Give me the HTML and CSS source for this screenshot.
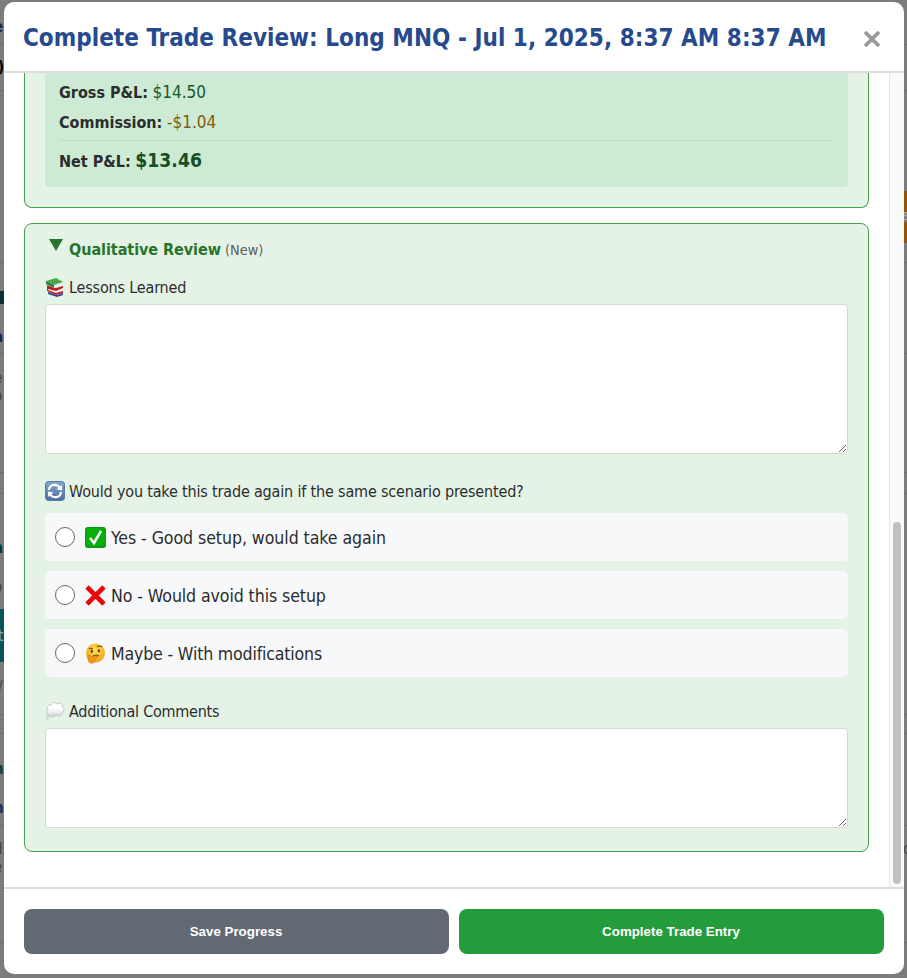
FILE: index.html
```
<!DOCTYPE html>
<html lang="en">
<head>
<meta charset="utf-8">
<title>Complete Trade Review</title>
<link rel="stylesheet" href="styles.css">
</head>
<body>
<div class="backdrop" aria-hidden="true">
  <span class="rule" style="top:44px"></span><span class="rule" style="top:90px"></span><span class="rule" style="top:262px"></span><span class="rule" style="top:353px"></span><span class="rule" style="top:472px"></span><span class="rule" style="top:493px"></span><span class="rule" style="top:714px"></span><span class="rule" style="top:733px"></span><span class="rule" style="top:825px"></span><span class="rule" style="top:942px"></span>
  <span class="block teal" style="top:609px;height:53px"></span>
  <span class="block dark" style="top:291px;height:13px"></span>
  <span class="block orange" style="top:191px;height:22px"></span>
  <span class="block orange" style="top:222px;height:21px"></span>
  <span class="peek navy" style="top:17px">e</span>
  <span class="peek black narrow" style="top:57px">)</span>
  <span class="peek navy" style="top:327px">a</span>
  <span class="peek" style="top:368px">e</span>
  <span class="peek" style="top:386px">o</span>
  <span class="peek deep" style="top:538px">a</span>
  <span class="peek" style="top:577px">o</span>
  <span class="peek light narrow" style="top:626px">t</span>
  <span class="peek narrow" style="top:677px">/</span>
  <span class="peek deep" style="top:759px">n</span>
  <span class="peek navy" style="top:798px">n</span>
  <span class="peek" style="top:839px">d</span>
  <span class="peek" style="top:857px">e</span>
  <span class="peek right" style="top:839px">c</span>
  <span class="peek right pale" style="top:207px">5</span>
</div>
<main class="modal">
  <header class="modal-head">
    <h1>Complete Trade Review: Long MNQ - Jul 1, 2025, 8:37 AM 8:37 AM</h1>
    <button class="close" aria-label="Close"><svg viewBox="0 0 18 18"><path d="M2 2 16 16M16 2 2 16"/></svg></button>
  </header>
  <div class="modal-body">
    <div class="content">
      <section class="panel results">
        <div class="summary">
          <p><b>Gross P&amp;L:</b> <span class="gain">$14.50</span></p>
          <p><b>Commission:</b> <span class="fee">-$1.04</span></p>
          <p class="net"><b>Net P&amp;L:</b> <strong>$13.46</strong></p>
        </div>
      </section>
      <section class="panel review">
        <h2><svg class="arrow" viewBox="0 0 14 12"><path d="M0 0H14L7 12Z"/></svg><span class="name">Qualitative Review</span><small>(New)</small></h2>
        <label class="label" for="lessons">
          <svg class="emoji" viewBox="0 0 20 20"><path fill="#2b4c91" d="M3 14 12 18 18 16V18L12 20 3 17Z"/><path fill="#f2eee8" d="M2 11 11 15 18 12V15L12 18 3 15Z"/><path fill="#bd2027" d="M2 8 11 11 18 9V11L11 14 3 12V13L11 16 18 14V16L11 18 2 14Z"/><path fill="#eee" d="M1 5 9 9 18 6V8L9 11 2 8Z"/><path fill="#287e35" d="M1 4 9 8V11L1 7Z"/><path fill="#49a84d" d="M1 4 11 1 18 5 9 8Z"/></svg>
          <span class="lesson-text">Lessons Learned</span></label>
        <textarea id="lessons" class="tall"></textarea>
        <div class="label again">
          <svg class="emoji" viewBox="0 0 20 20"><defs><linearGradient id="blue" x2="0" y2="1"><stop stop-color="#86a6cc"/><stop offset="1" stop-color="#47719f"/></linearGradient></defs><rect x=".5" y=".5" width="19" height="19" rx="3" fill="url(#blue)" stroke="#5378a5"/><path fill="none" stroke="#fff" stroke-width="2.2" d="M4 9C4.500 3 12 2 15 7M16 11C15.500 17 8 18 5 13"/><path fill="#fff" d="M17 4V9.500L11.500 8.500ZM3 16V10.500L8.500 11.500Z"/></svg>
          <span class="question">Would you take this trade again if the same scenario presented?</span></div>
        <div class="options">
          <label class="option"><input type="radio" name="again"><svg viewBox="0 0 21 21"><rect width="21" height="21" rx="3" fill="#079b0b"/><rect x="1" y="1" width="19" height="18" rx="2" fill="#08ae0b"/><path fill="none" stroke="#fff" stroke-width="2.500" d="M5 11 9 16 16 4"/></svg><span class="yes">Yes - Good setup, would take again</span></label>
          <label class="option"><input type="radio" name="again"><svg viewBox="0 0 21 21"><path fill="none" stroke="#e5090b" stroke-width="4.600" d="M2 2 19 19M19 2 2 19"/></svg><span class="no">No - Would avoid this setup</span></label>
          <label class="option"><input type="radio" name="again"><svg viewBox="0 0 21 21"><defs><radialGradient id="face" cy=".35"><stop stop-color="#ffe450"/><stop offset="1" stop-color="#f9ab24"/></radialGradient></defs><circle cx="10.500" cy="10" r="9.500" fill="url(#face)"/><path fill="none" stroke="#704214" stroke-width="1.100" d="M4 6Q6 4.500 8 6M12 4Q14.500 2 17 4M8 13Q11 11.500 14 13"/><ellipse cx="6.800" cy="8.300" rx="1.200" ry="1.500" fill="#593812"/><ellipse cx="13.800" cy="7.800" rx="1.200" ry="1.500" fill="#593812"/><path fill="#f39a18" stroke="#cf7913" stroke-width=".6" d="M3 12Q5 11 5.500 14L12 13Q14 14 11 15L9 16Q12 18 8 20Q4 21 3 17Z"/></svg><span class="maybe">Maybe - With modifications</span></label>
        </div>
        <label class="label comments" for="comments">
          <svg class="emoji" viewBox="0 0 20 20"><defs><linearGradient id="cloud" x2="0" y2="1"><stop offset=".4" stop-color="#fff"/><stop offset="1" stop-color="#cfd2d2"/></linearGradient></defs><path fill="url(#cloud)" stroke="#b5bab7" stroke-width=".7" d="M4 14C1 13 1 10 3 9C1 6 3 4 6 4C7 1 11 1 12 3C15 1 18 3 17 6C20 7 19 11 17 12C17 15 13 16 11 14C9 17 5 16 4 14Z"/><circle cx="3" cy="16" r="1.500" fill="#ddd" stroke="#bbb" stroke-width=".4"/><circle cx="1.200" cy="18.500" r=".8" fill="#ccc"/></svg>
          <span class="comment-text">Additional Comments</span></label>
        <textarea id="comments"></textarea>
      </section>
    </div>
    <div class="track"><div class="thumb"></div></div>
  </div>
  <footer><button class="save">Save Progress</button><button class="complete">Complete Trade Entry</button></footer>
</main>
</body>
</html>
```
FILE: styles.css
```
* { box-sizing: border-box; }
body { margin: 0; height: 978px; overflow: hidden; position: relative; color: #2b2d2c; font: 16px/20px "DejaVu Sans Condensed", "DejaVu Sans", sans-serif; font-stretch: condensed; }
h1, h2, p { margin: 0; }
button { border: 0; padding: 0; }
svg { display: block; flex: none; }
.backdrop { position: absolute; inset: 0; background: #7d7b7b; overflow: hidden; }
.rule, .block, .peek { position: absolute; }
.rule { left: 0; width: 100%; height: 1px; background: #6c6c6c; }
.block { left: 0; width: 4px; }
.teal { background: #07545d; }
.dark { background: #092f38; }
.block.orange { left: 904px; background: #9a5303; }
.peek { left: -6px; width: 10px; color: #444; font-size: 15px; overflow: hidden; }
.peek.narrow { left: -2px; width: 6px; }
.navy { color: #17295a; font-weight: bold; }
.black { color: #000; font-weight: bold; }
.deep { color: #073a3c; font-weight: bold; }
.light { color: #83aaad; }
.peek.right { left: 903px; }
.peek.pale { color: #aaa; font-size: 11px; }
.modal { position: absolute; left: 4px; top: 2px; width: 900px; height: 972px; background: #fff; border-radius: 10px; overflow: hidden; display: flex; flex-direction: column; }
.modal-head { height: 71px; flex: none; border-bottom: 2px solid #dedede; padding: 2px 23px 0 19px; display: flex; align-items: center; justify-content: space-between; }
h1 { font-size: 24px; line-height: 30px; letter-spacing: .03px; color: #264a8d; white-space: nowrap; }
.close { width: 18px; height: 18px; background: none; margin-top: 2px; }
.close svg { width: 18px; height: 18px; fill: none; stroke: #999; stroke-width: 3.7; }
.modal-body { flex: 1; min-height: 0; display: flex; }
.content { flex: 1; padding: 0 20px; }
.panel { border: 1px solid #45a04b; border-radius: 8px; background: #e5f3e6; padding: 0 20px 20px; }
.results { border-top: 0; border-radius: 0 0 8px 8px; height: 135px; }
.summary { height: 114px; padding: 4px 15px 0 14px; background: #cdead5; border-radius: 0 0 4px 4px; }
.summary p { height: 30px; line-height: 31px; white-space: nowrap; }
.summary .net { border-top: 1px solid #bfdec8; margin-top: 3px; height: 40px; line-height: 40px; }
.gain { color: #17582c; font-size: 17px; }
.fee { color: #815b0a; font-size: 17px; }
.net strong { color: #155023; font-size: 19.2px; }
.review { margin-top: 15px; height: 629px; }
h2 { display: flex; height: 50px; padding: 15px 0 0 4px; font-size: 16px; line-height: 22px; color: #26752b; white-space: nowrap; }
.arrow { width: 14px; height: 12px; fill: #26752b; margin-right: 6px; }
.name { letter-spacing: -.05px; }
small { font-size: 14.4px; font-weight: normal; color: #5b605c; margin-left: 4px; }
.label { display: flex; align-items: center; gap: 4px; height: 20px; margin: 3px 0 7px; white-space: nowrap; }
.label span { line-height: 22px; padding-top: 1px; }
.lesson-text, .question { letter-spacing: -.17px; }
.comment-text { letter-spacing: -.24px; }
.emoji { width: 20px; height: 20px; }
textarea { display: block; width: 100%; height: 100px; padding: 10px; background: #fff; border: 1px solid #d5d9d5; border-radius: 4px; resize: vertical; outline: 0; }
.tall { height: 150px; }
.again { margin: 27px 0 12px; }
.options { display: grid; gap: 10px; }
.option { display: flex; align-items: center; height: 48px; padding: 0 10px; background: #f7f8fa; border-radius: 5px; font-size: 17.6px; white-space: nowrap; }
.option span { padding-top: 2px; }
.yes { letter-spacing: -.07px; }
.no { letter-spacing: -.1px; }
.maybe { letter-spacing: -.18px; }
input { appearance: none; width: 20px; height: 20px; margin: 0 10px 0 0; border: 1px solid #666; border-radius: 50%; background: #fff; }
.option svg { width: 21px; height: 21px; margin-right: 5px; }
.comments { margin: 24px 0 7px; }
.track { width: 15px; border-left: 1px solid #e6e6e6; background: #fafafa; padding: 449px 3px 3px; }
.thumb { height: 362px; border-radius: 4px; background: #c1c1c1; }
footer { height: 87px; flex: none; border-top: 2px solid #dedede; padding: 20px; display: flex; gap: 10px; }
footer button { flex: 1; height: 45px; border-radius: 8px; color: #fff; font: bold 13.333px "Liberation Sans", sans-serif; padding-right: 1px; }
.save { background: #626972; }
.complete { background: #249c3c; }
```
